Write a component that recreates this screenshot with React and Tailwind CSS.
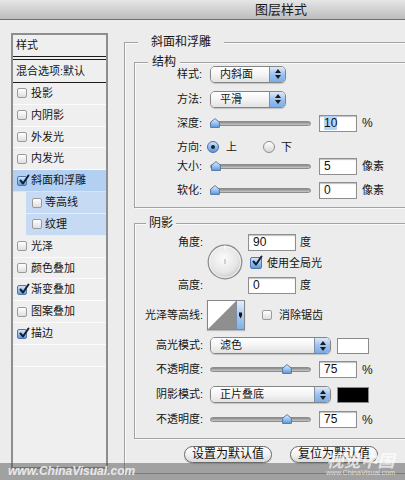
import React from 'react';

const layers = [
  { name: '投影' },
  { name: '内阴影' },
  { name: '外发光' },
  { name: '内发光' },
  { name: '斜面和浮雕', checked: true, selected: true },
  { name: '等高线', sub: true },
  { name: '纹理', sub: true },
  { name: '光泽' },
  { name: '颜色叠加' },
  { name: '渐变叠加', checked: true },
  { name: '图案叠加' },
  { name: '描边', checked: true },
];

function Check({ checked, big }) {
  const size = big ? 'w-[12px] h-[12px]' : 'w-[10px] h-[10px]';
  if (checked) {
    return (
      <div className={`${size} shrink-0 relative rounded-[2px] border border-[#4d78ad] bg-gradient-to-b from-[#d4e6fb] to-[#5f9ae0]`}>
        <svg viewBox="0 0 12 12" className="absolute left-[0px] top-[-3px] w-[12px] h-[12px]">
          <path d="M2.5 6.5 L5 9.5 L10.5 1.5" fill="none" stroke="#15202c" strokeWidth="2" strokeLinecap="round" strokeLinejoin="round" />
        </svg>
      </div>
    );
  }
  return <div className={`${size} shrink-0 rounded-[2px] border border-[#9a9a9a] bg-gradient-to-b from-white to-[#dedede]`} />;
}

function Radio({ on }) {
  if (on) {
    return (
      <div className="w-[12px] h-[12px] rounded-full border border-[#4d6f9c] bg-gradient-to-b from-[#cfe3fb] to-[#5c97dd] flex items-center justify-center">
        <div className="w-[4px] h-[4px] rounded-full bg-[#18222e]" />
      </div>
    );
  }
  return <div className="w-[12px] h-[12px] rounded-full border border-[#8d8d8d] bg-gradient-to-b from-white to-[#d8d8d8]" />;
}

function Arrows() {
  return (
    <div className="w-[16px] shrink-0 border-l border-[#7f8ea3] bg-gradient-to-b from-[#dfeafa] via-[#9cc2ef] to-[#78aee9] flex flex-col items-center justify-center gap-[2px]">
      <svg viewBox="0 0 6 4" className="w-[6px] h-[4px]"><path d="M0 4 L3 0 L6 4 Z" fill="#1b1b1b" /></svg>
      <svg viewBox="0 0 6 4" className="w-[6px] h-[4px]"><path d="M0 0 L3 4 L6 0 Z" fill="#1b1b1b" /></svg>
    </div>
  );
}

function Select({ value, w }) {
  return (
    <div className={`flex h-[17px] ${w} rounded-[5px] border border-[#858585] overflow-hidden shadow-[0_1px_1px_rgba(0,0,0,0.18)]`}>
      <div className="flex-1 bg-gradient-to-b from-white via-[#f4f4f4] to-[#e2e2e2] pl-[9px] text-[11px] leading-[15px]">{value}</div>
      <Arrows />
    </div>
  );
}

function Slider({ thumb }) {
  return (
    <div className="relative w-[101px] h-[5px] rounded-full bg-gradient-to-b from-[#8a8a8a] to-[#c8c8c8] border border-[#8c8c8c]">
      <svg viewBox="0 0 10 10" className="absolute top-[-4px] w-[10px] h-[10px]" style={{ left: thumb }}>
        <defs>
          <linearGradient id="thumbg" x1="0" y1="0" x2="0" y2="1">
            <stop offset="0" stopColor="#e4f0fd" />
            <stop offset="1" stopColor="#5d9be2" />
          </linearGradient>
        </defs>
        <path d="M5 0.6 L9.4 4.2 L9.4 9.4 L0.6 9.4 L0.6 4.2 Z" fill="url(#thumbg)" stroke="#4a6f9e" strokeWidth="0.9" />
      </svg>
    </div>
  );
}

function Field({ value, w = 'w-[38px]', selected }) {
  return (
    <div className={`${w} h-[17px] shrink-0 border border-[#8f8f8f] bg-white shadow-[inset_0_1px_1px_rgba(0,0,0,0.25)] pl-[4px] text-[12px] leading-[15px] font-['Liberation_Sans',sans-serif] text-[#111]`}>
      {selected ? <span className="bg-[#b2d3fb]">{value}</span> : value}
    </div>
  );
}

function Group({ title, className, titleClass, children }) {
  return (
    <div className={`border border-[#a2a2a2] shadow-[inset_1px_1px_0_#fafafa,1px_1px_0_#fafafa] ${className}`}>
      <div className={`-mt-[9px] h-[16px] w-fit bg-[#ececec] text-[12px] leading-[16px] text-[#151515] ${titleClass}`}>{title}</div>
      {children}
    </div>
  );
}

function Dial() {
  return (
    <svg viewBox="0 0 36 36" className="w-[36px] h-[36px]">
      <defs>
        <radialGradient id="dialg" cx="0.45" cy="0.4" r="0.6">
          <stop offset="0" stopColor="#fbfbfb" />
          <stop offset="0.7" stopColor="#e6e6e6" />
          <stop offset="1" stopColor="#c9c9c9" />
        </radialGradient>
      </defs>
      <circle cx="18" cy="18" r="16.8" fill="url(#dialg)" stroke="#8a8a8a" strokeWidth="1.2" />
      <circle cx="18" cy="18" r="15.6" fill="none" stroke="#ffffff" strokeWidth="0.8" opacity="0.8" />
      <line x1="18" y1="1.5" x2="18" y2="5" stroke="#ffffff" strokeWidth="1.2" />
      <line x1="18" y1="15" x2="18" y2="20" stroke="#9a9a9a" strokeWidth="0.8" />
    </svg>
  );
}

function Contour() {
  return (
    <div className="flex w-[38px] h-[30px] border border-[#868686] overflow-hidden shadow-[0_1px_1px_rgba(0,0,0,0.2)]">
      <svg viewBox="0 0 28 28" className="w-[28px] h-[28px]" preserveAspectRatio="none">
        <rect width="28" height="28" fill="#ffffff" />
        <path d="M28 0 L28 28 L0 28 Z" fill="#8f8f8f" />
        <line x1="0" y1="28" x2="28" y2="0" stroke="#d8d8d8" strokeWidth="0.8" strokeDasharray="1.5 1.5" />
      </svg>
      <div className="flex-1 border-l border-[#7f8ea3] bg-gradient-to-b from-[#e5eefb] via-[#a8cbf2] to-[#7db1ea] flex items-center justify-center">
        <svg viewBox="0 0 4 8" className="w-[3px] h-[7px]"><path d="M0 0 L4 0 L4 4 L2 8 L0 4 Z" fill="#111" /></svg>
      </div>
    </div>
  );
}

function Pill({ label }) {
  return (
    <div className="w-[88px] h-[17px] rounded-full border border-[#6a6a6a] bg-gradient-to-b from-white via-[#f2f2f2] to-[#d9d9d9] shadow-[0_1px_1px_rgba(0,0,0,0.2)] text-center text-[12px] leading-[15px] text-[#111]">
      {label}
    </div>
  );
}

export default function App() {
  return (
    <div className="relative w-[405px] h-[480px] overflow-hidden bg-[#ececec] text-[#151515] font-['Liberation_Sans','Noto_Sans_CJK_SC',sans-serif]">
      {/* title bar */}
      <div className="h-[20px] border-b border-[#6f6f6f] bg-gradient-to-b from-[#e6e6e6] to-[#bdbdbd] pl-[255px] text-[13px] leading-[19px] text-[#1a1a1a]">
        图层样式
      </div>

      <div className="flex">
        {/* layer list */}
        <div className="ml-[11px] mt-[13px] w-[97px] shrink-0 h-[436px] border-2 border-[#8e8e8e] bg-[#efefef] flex flex-col text-[11px]">
          <div className="h-[22px] shrink-0 border-b border-[#1c1c1c] pl-[3px] flex items-center leading-none">样式</div>
          <div className="h-[24px] shrink-0 mt-[2px] border-t border-b border-[#1c1c1c] pl-[3px] flex items-center leading-none">混合选项:默认</div>
          {layers.map((l) =>
            l.sub ? (
              <div key={l.name} className="h-[21.83px] shrink-0 flex">
                <div className="w-[13px]" />
                <div className="flex-1 bg-[#c6daf3] border-b border-[#e4edf8] pl-[6px] flex items-center gap-[3px] leading-none">
                  <Check checked={l.checked} />
                  <span>{l.name}</span>
                </div>
              </div>
            ) : (
              <div
                key={l.name}
                className={`h-[21.83px] shrink-0 border-b pl-[4px] flex items-center gap-[4px] leading-none ${l.selected ? 'bg-[#b3cff1] border-[#d5e4f6]' : 'border-[#fbfbfb]'}`}
              >
                <Check checked={l.checked} />
                <span>{l.name}</span>
              </div>
            )
          )}
          <div className="h-[21.83px] shrink-0 border-b border-[#fbfbfb]" />
        </div>

        {/* settings */}
        <div className="ml-[16px] mt-[22px] w-[300px] shrink-0">
          <div className="w-[300px] h-[432px] border border-[#a2a2a2] shadow-[inset_1px_1px_0_#fafafa]">
            <div className="-mt-[9px] ml-[13px] px-[13px] h-[16px] w-fit bg-[#ececec] text-[12px] leading-[16px]">斜面和浮雕</div>

            {/* 结构 */}
            <Group title="结构" className="ml-[9px] mt-[12px] w-[290px] pb-[8px] pl-[42px] text-[11px]" titleClass="-ml-[29px] px-[4px]">
              <div className="-mt-[5px] h-[18px] flex items-center">
                <span className="w-[33px] leading-none">样式:</span>
                <Select value="内斜面" w="w-[76px]" />
              </div>
              <div className="mt-[7px] h-[18px] flex items-center">
                <span className="w-[33px] leading-none">方法:</span>
                <Select value="平滑" w="w-[76px]" />
              </div>
              <div className="mt-[6px] h-[18px] flex items-center">
                <span className="w-[33px] leading-none">深度:</span>
                <Slider thumb={-1} />
                <div className="ml-[8px]"><Field value="10" selected /></div>
                <span className="ml-[5px] text-[12px] leading-none">%</span>
              </div>
              <div className="mt-[6px] h-[18px] flex items-center">
                <span className="w-[30px] leading-none">方向:</span>
                <Radio on />
                <span className="ml-[7px] leading-none">上</span>
                <div className="ml-[26px]"><Radio /></div>
                <span className="ml-[6px] leading-none">下</span>
              </div>
              <div className="mt-[1px] h-[18px] flex items-center">
                <span className="w-[33px] leading-none">大小:</span>
                <Slider thumb={0} />
                <div className="ml-[8px]"><Field value="5" /></div>
                <span className="ml-[5px] leading-none">像素</span>
              </div>
              <div className="mt-[6px] h-[18px] flex items-center">
                <span className="w-[33px] leading-none">软化:</span>
                <Slider thumb={-1} />
                <div className="ml-[8px]"><Field value="0" /></div>
                <span className="ml-[5px] leading-none">像素</span>
              </div>
            </Group>

            {/* 阴影 */}
            <Group title="阴影" className="ml-[9px] mt-[15px] w-[290px] pb-[10px] text-[11px]" titleClass="ml-[11px] px-[3px]">
              <div className="mt-[2px] flex">
                <div className="w-[70px] shrink-0 flex flex-col items-end">
                  <div className="h-[18px] flex items-center leading-none pr-[2px]">角度:</div>
                  <div className="mt-[25px] h-[18px] flex items-center leading-none pr-[2px]">高度:</div>
                </div>
                <div className="ml-[2px] mt-[11px]"><Dial /></div>
                <div className="ml-[5px] flex flex-col">
                  <div className="h-[18px] flex items-center">
                    <Field value="90" w="w-[48px]" />
                    <span className="ml-[4px] leading-none">度</span>
                  </div>
                  <div className="mt-[5px] h-[14px] ml-[2px] flex items-center gap-[5px]">
                    <Check checked big />
                    <span className="leading-none">使用全局光</span>
                  </div>
                  <div className="mt-[6px] h-[18px] flex items-center">
                    <Field value="0" w="w-[48px]" />
                    <span className="ml-[4px] leading-none">度</span>
                  </div>
                </div>
              </div>

              <div className="mt-[6px] h-[30px] flex items-center">
                <div className="w-[70px] shrink-0 text-right pr-[2px] leading-none">光泽等高线:</div>
                <div className="ml-[2px]"><Contour /></div>
                <div className="ml-[17px]"><Check /></div>
                <span className="ml-[7px] leading-none">消除锯齿</span>
              </div>

              <div className="mt-[7px] h-[17px] flex items-center">
                <div className="w-[70px] shrink-0 text-right pr-[2px] leading-none">高光模式:</div>
                <div className="ml-[5px]"><Select value="滤色" w="w-[121px]" /></div>
                <div className="ml-[6px] w-[32px] h-[16px] bg-white border border-[#8a8a8a]" />
              </div>

              <div className="mt-[7px] h-[17px] flex items-center">
                <div className="w-[70px] shrink-0 text-right pr-[2px] leading-none">不透明度:</div>
                <div className="ml-[5px]"><Slider thumb={71} /></div>
                <div className="ml-[8px]"><Field value="75" /></div>
                <span className="ml-[5px] text-[12px] leading-none">%</span>
              </div>

              <div className="mt-[8px] h-[17px] flex items-center">
                <div className="w-[70px] shrink-0 text-right pr-[2px] leading-none">阴影模式:</div>
                <div className="ml-[5px]"><Select value="正片叠底" w="w-[121px]" /></div>
                <div className="ml-[6px] w-[32px] h-[16px] bg-black border border-[#8a8a8a]" />
              </div>

              <div className="mt-[8px] h-[17px] flex items-center">
                <div className="w-[70px] shrink-0 text-right pr-[2px] leading-none">不透明度:</div>
                <div className="ml-[5px]"><Slider thumb={71} /></div>
                <div className="ml-[8px]"><Field value="75" /></div>
                <span className="ml-[5px] text-[12px] leading-none">%</span>
              </div>
            </Group>

            <div className="mt-[7px] ml-[59px] flex gap-[18px]">
              <Pill label="设置为默认值" />
              <Pill label="复位为默认值" />
            </div>
          </div>
        </div>
      </div>

      {/* watermark strip */}
      <div className="absolute left-0 right-0 bottom-0 h-[17px] bg-[#555555]/[0.5] pl-[8px] text-[12px] leading-[17px] italic font-bold text-[#e9e9e9] font-['Liberation_Sans',sans-serif]">
        www.ChinaVisual.com
      </div>
      <div className="absolute right-[10px] bottom-[3px] flex flex-col items-center text-white/70">
        <span className="text-[17px] leading-[18px] font-bold italic font-['Noto_Sans_CJK_SC',sans-serif]">视觉中国</span>
        <span className="text-[7px] leading-[8px] font-['Liberation_Sans',sans-serif]">www.ChinaVisual.com</span>
      </div>
    </div>
  );
}
